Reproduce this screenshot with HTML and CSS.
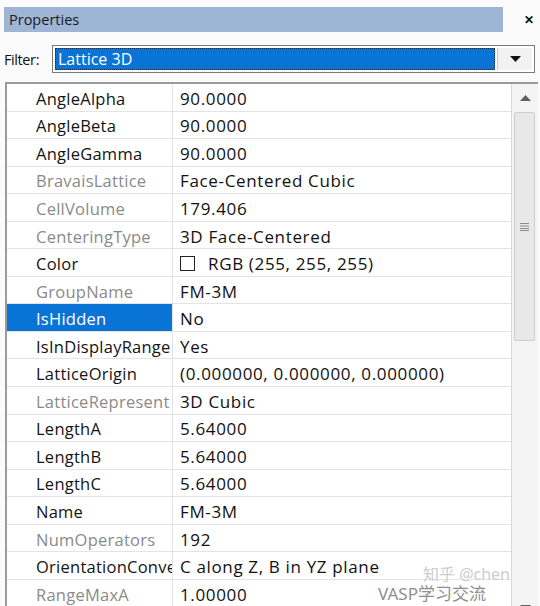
FILE: index.html
```html
<!DOCTYPE html>
<html lang="en">
<head>
    <meta charset="UTF-8">
    <title>Properties</title>
    <link rel="stylesheet" href="styles.css">
</head>
<body>
    <div class="panel">
        <div class="titlebar">
            <div class="title">Properties</div>
            <div class="close">&#x2715;</div>
        </div>

        <div class="filter">
            <span class="filter-label">Filter:</span>
            <div class="combo">
                <div class="combo-value"><span>Lattice 3D</span></div>
                <div class="combo-btn">
                    <svg width="11" height="6" viewBox="0 0 11 6"><path d="M0 0 H11 L5.5 6 Z" fill="#111"/></svg>
                </div>
            </div>
        </div>

        <!-- property grid -->
        <div class="grid">
            <div class="rows">
                <div class="row"><div class="name">AngleAlpha</div><div class="value">90.0000</div></div>
                <div class="row"><div class="name">AngleBeta</div><div class="value">90.0000</div></div>
                <div class="row"><div class="name">AngleGamma</div><div class="value">90.0000</div></div>
                <div class="row"><div class="name readonly">BravaisLattice</div><div class="value">Face-Centered Cubic</div></div>
                <div class="row"><div class="name readonly">CellVolume</div><div class="value">179.406</div></div>
                <div class="row"><div class="name readonly">CenteringType</div><div class="value">3D Face-Centered</div></div>
                <div class="row"><div class="name">Color</div><div class="value"><span class="swatch"></span>RGB (255, 255, 255)</div></div>
                <div class="row"><div class="name readonly">GroupName</div><div class="value">FM-3M</div></div>
                <div class="row selected"><div class="name">IsHidden</div><div class="value">No</div></div>
                <div class="row"><div class="name">IsInDisplayRange</div><div class="value">Yes</div></div>
                <div class="row"><div class="name">LatticeOrigin</div><div class="value">(0.000000, 0.000000, 0.000000)</div></div>
                <div class="row"><div class="name readonly">LatticeRepresent</div><div class="value">3D Cubic</div></div>
                <div class="row"><div class="name">LengthA</div><div class="value">5.64000</div></div>
                <div class="row"><div class="name">LengthB</div><div class="value">5.64000</div></div>
                <div class="row"><div class="name">LengthC</div><div class="value">5.64000</div></div>
                <div class="row"><div class="name">Name</div><div class="value">FM-3M</div></div>
                <div class="row"><div class="name readonly">NumOperators</div><div class="value">192</div></div>
                <div class="row"><div class="name">OrientationConve</div><div class="value">C along Z, B in YZ plane</div></div>
                <div class="row"><div class="name readonly">RangeMaxA</div><div class="value">1.00000</div></div>
            </div>
            <div class="scrollbar">
                <div class="arrow">
                    <svg width="11" height="6" viewBox="0 0 11 6"><path d="M0 6 H11 L5.5 0 Z" fill="#606060"/></svg>
                </div>
                <div class="track">
                    <div class="thumb">
                        <svg width="9" height="8" viewBox="0 0 9 8"><path d="M0 0.5 H9 M0 3 H9 M0 5.5 H9 M0 7.5 H9" stroke="#8a8a8a" stroke-width="1"/></svg>
                    </div>
                </div>
                <div class="arrow">
                    <svg width="11" height="6" viewBox="0 0 11 6"><path d="M0 0 H11 L5.5 6 Z" fill="#606060"/></svg>
                </div>
            </div>
        </div>

        <div class="watermark">
            <div class="wm-top">知乎 @chen</div>
            <div class="wm-bottom">VASP学习交流</div>
        </div>
    </div>
</body>
</html>
```

FILE: styles.css
```css
body {
    margin: 0;
    background-color: #fbfbfb;
    font-family: "Open Sans", "Noto Sans", sans-serif;
    color: #111;
}
.panel {
    position: relative;
    width: 540px;
    height: 606px;
    overflow: hidden;
    padding-top: 7px;
    box-sizing: border-box;
}
.titlebar {
    display: flex;
    align-items: center;
    height: 25px;
}
.title {
    margin-left: 4px;
    width: 499px;
    height: 25px;
    line-height: 25px;
    background-color: #9fb5d6;
    padding-left: 5px;
    box-sizing: border-box;
    font-size: 14.5px;
    color: #1a1a1a;
}
.close {
    flex: 1;
    text-align: center;
    font-size: 12px;
    font-weight: bold;
    padding-left: 14px;
}
.filter {
    display: flex;
    align-items: center;
    margin-top: 13px;
    height: 28px;
}
.filter-label {
    width: 52px;
    padding-left: 4px;
    box-sizing: border-box;
    font-size: 14.5px;
    letter-spacing: -0.4px;
}
.combo {
    display: flex;
    width: 483px;
    height: 28px;
    border: 1px solid #7a7a7a;
    box-sizing: border-box;
    background-color: #fff;
    padding: 2px;
}
.combo-value {
    width: 440px;
    background-color: #0a74d6;
    border: 1px dotted #1a2a40;
    box-sizing: border-box;
    color: #fff;
    font-size: 16px;
    line-height: 21px;
    padding-left: 2px;
}
.combo-btn {
    flex: 1;
    display: flex;
    align-items: center;
    justify-content: center;
    margin-left: 2px;
    background-color: #f2f2f2;
    border-left: 1px solid #c8c8c8;
}
.grid {
    display: flex;
    margin-top: 9px;
    margin-left: 5px;
    width: 533px;
    height: 540px;
    border-top: 2px solid #9a9a9a;
    border-left: 2px solid #9a9a9a;
    background-color: #fff;
    box-sizing: border-box;
}
.rows {
    width: 504px;
    border-right: 1px solid #d8d8d8;
}
.row {
    display: flex;
    height: 27.55px;
    border-bottom: 1px solid #e4e4e4;
    box-sizing: border-box;
}
.name, .value {
    display: flex;
    align-items: center;
    padding-top: 2px;
    box-sizing: border-box;
    white-space: nowrap;
    overflow: hidden;
}
.name {
    width: 166px;
    padding-left: 29px;
    border-right: 1px solid #e4e4e4;
    color: #141414;
    font-size: 16.5px;
    letter-spacing: 0.25px;
}
.name.readonly {
    color: #8a8a8a;
}
.value {
    flex: 1;
    padding-left: 7px;
    font-size: 17px;
    letter-spacing: 0.65px;
}
.selected .name {
    background-color: #0a74d6;
    color: #fff;
}
.swatch {
    display: inline-block;
    flex-shrink: 0;
    width: 15px;
    height: 15px;
    border: 1px solid #222;
    box-sizing: border-box;
    margin-right: 13px;
    background-color: #fff;
}
.scrollbar {
    flex: 1;
    display: flex;
    flex-direction: column;
    background-color: #f4f4f4;
}
.arrow {
    height: 28px;
    display: flex;
    align-items: center;
    justify-content: center;
}
.track {
    flex: 1;
    padding: 0 3px 0 2px;
}
.thumb {
    height: 229px;
    background-color: #e8e8e8;
    border: 1px solid #cdcdcd;
    border-radius: 2px;
    display: flex;
    align-items: center;
    justify-content: center;
    box-sizing: border-box;
}
.watermark {
    position: absolute;
    right: 30px;
    bottom: 2px;
    text-align: right;
    font-family: "Noto Sans", "Noto Sans CJK SC", sans-serif;
    line-height: 20px;
}
.wm-top {
    font-size: 16px;
    color: #cdcdcd;
}
.wm-bottom {
    font-size: 17px;
    margin-right: 24px;
    color: #8f8f8f;
}
```
